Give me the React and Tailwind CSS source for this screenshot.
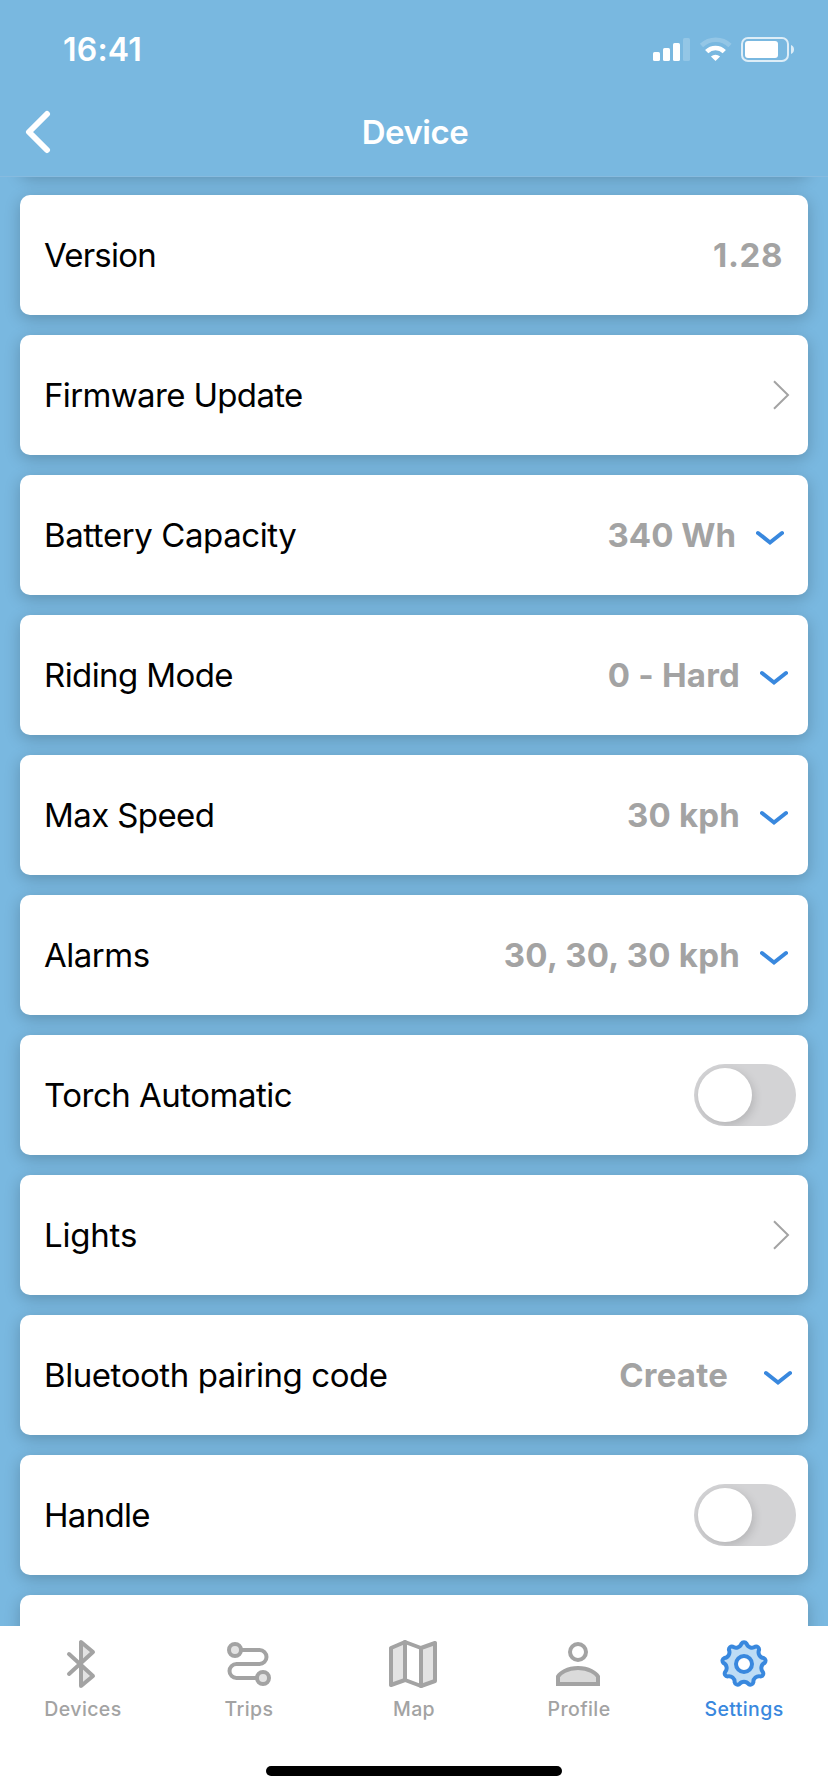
import { useState } from 'react';

const ROWS = [
  { label: 'Version', labelClass: 'tracking-[-0.8px]', type: 'text', value: '1.28', valueClass: 'mr-[25px] tracking-[0.6px]' },
  { label: 'Firmware Update', labelClass: 'tracking-[-0.65px]', type: 'link' },
  { label: 'Battery Capacity', labelClass: 'tracking-[-0.42px]', type: 'select', value: '340 Wh', valueClass: 'mr-5', iconClass: 'mr-6' },
  { label: 'Riding Mode', labelClass: 'tracking-[-0.6px]', type: 'select', value: '0 - Hard', valueClass: 'mr-5 tracking-[0.2px]', iconClass: 'mr-5' },
  { label: 'Max Speed', labelClass: 'tracking-[-0.6px]', type: 'select', value: '30 kph', valueClass: 'mr-5 tracking-[0.2px]', iconClass: 'mr-5' },
  { label: 'Alarms', labelClass: 'tracking-[-0.5px]', type: 'select', value: '30, 30, 30 kph', valueClass: 'mr-5 tracking-[0.25px]', iconClass: 'mr-5' },
  { label: 'Torch Automatic', labelClass: 'tracking-[-0.5px]', type: 'toggle' },
  { label: 'Lights', labelClass: 'tracking-[-0.2px]', type: 'link' },
  { label: 'Bluetooth pairing code', labelClass: 'tracking-[-0.43px]', type: 'select', value: 'Create', valueClass: 'mr-[36px] tracking-[0.2px]', iconClass: 'mr-4' },
  { label: 'Handle', labelClass: 'tracking-[-0.7px]', type: 'toggle' },
];

function StatusBar() {
  return (
    <div className="flex h-[88px] items-start justify-between pl-[63px] pr-[34px] pt-[30px] text-white">
      <span className="text-[32px] font-semibold leading-[40px] tracking-[0.2px]">16:41</span>
      <svg className="mt-[7px]" width="142" height="26" viewBox="652 37 142 26" fill="white">
        <rect x="653" y="52" width="7" height="9" rx="1.6" />
        <rect x="663" y="48" width="7" height="13" rx="1.6" />
        <rect x="673" y="43" width="7" height="18" rx="1.6" />
        <rect x="683" y="38" width="7" height="23" rx="1.6" opacity="0.2" />
        <path d="M701.5 45.5a20.500 20.500 0 0 1 28.500 0" fill="none" stroke="white" strokeWidth="4.6" opacity="0.2" />
        <path d="M706.7 51.6a12.5 12.5 0 0 1 17.6 0" fill="none" stroke="white" strokeWidth="4.6" />
        <path d="M715.5 61l-4.6-4.6a7 7 0 0 1 9.2 0z" />
        <rect x="742" y="38" width="46" height="23" rx="6" fill="none" stroke="white" strokeWidth="2" opacity="0.75" />
        <rect x="745" y="41" width="33" height="17" rx="3" />
        <path d="M791 45c4 1.500 4 7.500 0 9z" opacity="0.75" />
      </svg>
    </div>
  );
}

function Header() {
  return (
    <header className="h-[177px] shrink-0 border-b border-[#87bbdf] bg-[#79b8e0]">
      <StatusBar />
      <div className="grid h-[88px] grid-cols-[1fr_auto_1fr] items-center text-white">
        <button className="w-fit pl-6" aria-label="Back">
          <svg width="28" height="44" viewBox="0 0 28 44" fill="none" stroke="white" strokeWidth="6" strokeLinecap="round" strokeLinejoin="round">
            <path d="M23 4L5 22L23 40" />
          </svg>
        </button>
        <h1 className="pl-0.5 text-[33px] font-semibold leading-[40px] tracking-[-0.5px]">Device</h1>
      </div>
    </header>
  );
}

function Toggle({ label }) {
  const [on, setOn] = useState(false);
  return (
    <button
      role="switch"
      aria-label={label}
      aria-checked={on}
      onClick={() => setOn(!on)}
      className={`mr-3 flex h-[62px] w-[102px] items-center overflow-hidden rounded-full px-1 ${
        on ? 'justify-end bg-[#3988de]' : 'justify-start bg-[#d3d3d5]'
      }`}
    >
      <span className="size-[54px] rounded-full bg-white shadow-[2px_3px_10px_rgba(0,0,0,0.15)]" />
    </button>
  );
}

function Row({ row }) {
  return (
    <div className="flex h-[120px] shrink-0 items-center rounded-[10px] bg-white pl-6 shadow-[0_4px_16px_rgba(0,0,0,0.21)]">
      <span className={`flex-1 text-[33px] leading-[40px] text-black ${row.labelClass}`}>{row.label}</span>
      {row.value && (
        <span className={`text-[33px] font-bold leading-[40px] text-[#a3a3a3] ${row.valueClass}`}>{row.value}</span>
      )}
      {row.type === 'select' && (
        <svg className={`mt-1.5 ${row.iconClass}`} width="28" height="16" viewBox="0 0 28 16" fill="none" stroke="#3988de" strokeWidth="4" strokeLinecap="round">
          <path d="M2 3L14 12.500L26 3" />
        </svg>
      )}
      {row.type === 'link' && (
        <svg className="mr-[18px]" width="17" height="30" viewBox="0 0 17 30" fill="none" stroke="#a3a3a3" strokeWidth="2">
          <path d="M1 1.300L15 15L1 28.700" />
        </svg>
      )}
      {row.type === 'toggle' && <Toggle label={row.label} />}
    </div>
  );
}

// nine rounded teeth joined by concave arcs
function gearPath() {
  const point = (deg) => {
    const a = (deg * Math.PI) / 180;
    return `${(24 + 20.6 * Math.sin(a)).toFixed(2)} ${(24 - 20.6 * Math.cos(a)).toFixed(2)}`;
  };
  let d = `M${point(-7)}`;
  for (let i = 0; i < 9; i++) {
    d += `A3 3 0 0 1 ${point(i * 40 + 7)}A5.7 5.7 0 0 0 ${point(i * 40 + 33)}`;
  }
  return `${d}Z`;
}

const TABS = [
  {
    name: 'Devices',
    icon: (
      <>
        <path d="M22 2L34 12L22 24ZM22 24L34 36L22 46Z" fill="#e3e3e3" stroke="none" />
        <path d="M10 34L34 12L22 2V46L34 36L10 14" />
      </>
    ),
  },
  {
    name: 'Trips',
    icon: (
      <>
        <path d="M16 10H34.500a7 7 0 0 1 0 14H11.500a7 7 0 0 0 0 14H32" />
        <circle cx="10" cy="10" r="6" fill="#e3e3e3" />
        <circle cx="38" cy="38" r="6" fill="#e3e3e3" />
      </>
    ),
  },
  {
    name: 'Map',
    icon: (
      <>
        <path d="M1 8L15 2V40L1 45ZM31 8L45 3V41L31 46Z" fill="#e3e3e3" />
        <path d="M15 2L31 8M15 40L31 46" />
      </>
    ),
  },
  {
    name: 'Profile',
    icon: (
      <>
        <circle cx="23" cy="12" r="8" />
        <path d="M3 44V36.500C5 33 12 28 23 28S41 33 43 36.500V44Z" fill="#dadada" strokeLinejoin="miter" />
      </>
    ),
  },
  {
    name: 'Settings',
    icon: (
      <>
        <path d={gearPath()} fill="#bddcf5" />
        <circle cx="24" cy="24" r="8" fill="white" />
      </>
    ),
  },
];

function TabBar() {
  const [active, setActive] = useState('Settings');
  return (
    <nav className="flex h-[166px] shrink-0 flex-col items-center justify-between bg-white pb-4 pt-[14px]">
      <div className="grid w-full grid-cols-[166px_166px_164px_166px_164px]">
        {TABS.map((tab) => (
          <button
            key={tab.name}
            onClick={() => setActive(tab.name)}
            className={`flex flex-col items-center ${active === tab.name ? 'text-[#3988de]' : 'text-[#a3a3a3]'}`}
          >
            <svg className="overflow-visible" width="48" height="48" viewBox="0 0 48 48" fill="none" stroke="currentColor" strokeWidth="4" strokeLinecap="round" strokeLinejoin="round">
              {tab.icon}
            </svg>
            <span className="mt-2 text-[19.5px] font-medium leading-[26px] tracking-[0.4px]">{tab.name}</span>
          </button>
        ))}
      </div>
      <div className="h-[10px] w-[296px] rounded-full bg-black" />
    </nav>
  );
}

export default function App() {
  return (
    <div className="flex h-[1792px] w-[828px] flex-col overflow-hidden bg-[#79b8e0] font-['Inter','Liberation_Sans',sans-serif]">
      <Header />
      <main className="flex min-h-0 flex-1 flex-col gap-5 overflow-hidden px-5">
        {/* tail of the card that is scrolled under the header */}
        <div className="-mt-[122px] h-[120px] shrink-0 rounded-[10px] bg-white shadow-[0_4px_16px_rgba(0,0,0,0.21)]" />
        {ROWS.map((row) => (
          <Row key={row.label} row={row} />
        ))}
        <div className="h-[120px] shrink-0 rounded-[10px] bg-white shadow-[0_4px_16px_rgba(0,0,0,0.21)]" />
      </main>
      <TabBar />
    </div>
  );
}
